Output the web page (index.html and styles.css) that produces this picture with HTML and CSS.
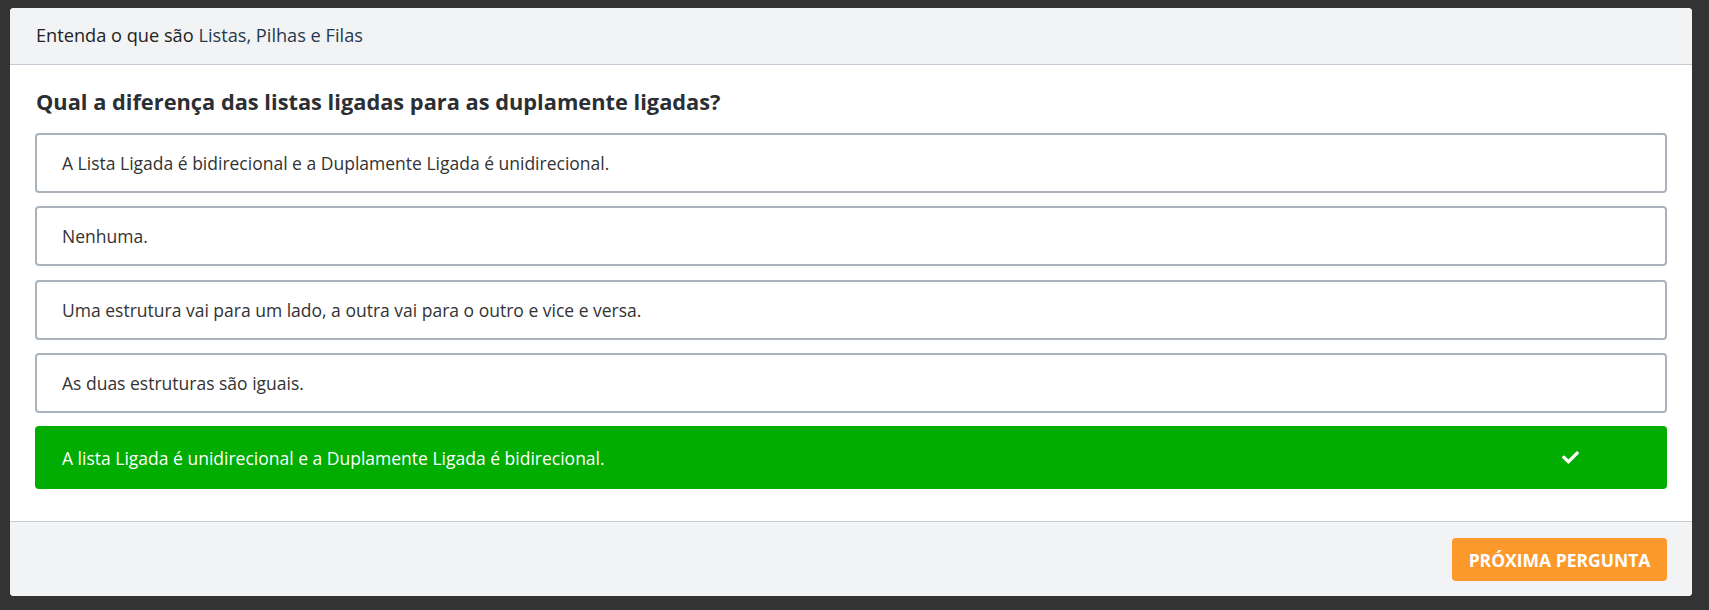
FILE: index.html
```html
<!DOCTYPE html>
<html lang="pt-BR">
<head>
<meta charset="utf-8">
<title>Quiz</title>
<link rel="stylesheet" href="styles.css">
</head>
<body>
<div class="page">
  <div class="card">
    <div class="card-header">
      <span class="crumb">Entenda o que são </span><span class="crumb-link">Listas, Pilhas e Filas</span>
    </div>
    <div class="card-body">
      <h2 class="question">Qual a diferença das listas ligadas para as duplamente ligadas?</h2>
      <div class="options">
        <div class="option">A Lista Ligada é bidirecional e a Duplamente Ligada é unidirecional.</div>
        <div class="option">Nenhuma.</div>
        <div class="option">Uma estrutura vai para um lado, a outra vai para o outro e vice e versa.</div>
        <div class="option">As duas estruturas são iguais.</div>
        <div class="option option-correct">
          <span>A lista Ligada é unidirecional e a Duplamente Ligada é bidirecional.</span>
          <svg class="check" viewBox="0 0 512 512" width="17" height="17" aria-hidden="true"><path fill="#fff" d="M173.898 439.404l-166.4-166.4c-9.997-9.997-9.997-26.206 0-36.204l36.203-36.204c9.997-9.998 26.207-9.998 36.204 0L192 312.69 432.095 72.596c9.997-9.997 26.207-9.997 36.204 0l36.203 36.204c9.997 9.997 9.997 26.206 0 36.204l-294.4 294.401c-9.998 9.997-26.207 9.997-36.204-.001z"/></svg>
        </div>
      </div>
    </div>
    <div class="card-footer">
      <button class="btn-next" type="button">PRÓXIMA PERGUNTA</button>
    </div>
  </div>
</div>
</body>
</html>
```

FILE: styles.css
```css
* { box-sizing: border-box; }
html, body {
  margin: 0;
  padding: 0;
  background: #333333;
}
body {
  font-family: "Open Sans", "Liberation Sans", sans-serif;
  color: #333;
}
.page {
  padding: 8px 17px 14px 10px;
}
.card {
  background: #ffffff;
  border-radius: 4px;
  overflow: hidden;
  height: 588px;
  display: flex;
  flex-direction: column;
}
.card-header {
  background: #f2f3f5;
  border-bottom: 1px solid #c3cad3;
  padding: 15px 26px 17px 26px;
  font-size: 18.2px;
  line-height: 24px;
  height: 57px;
}
.crumb { color: #222; }
.crumb-link { color: #26384f; }
.card-body {
  padding: 22px 25px 32px 25px;
  flex: 1;
}
.question {
  margin: 0 0 16px 1px;
  font-size: 21.8px;
  line-height: 30px;
  font-weight: 700;
  color: #2b2f33;
}
.options {
  display: flex;
  flex-direction: column;
  gap: 13.3px;
}
.option {
  border: 2px solid #aab2bb;
  border-radius: 4px;
  padding: 16px 25px 16px 25px;
  font-size: 17.5px;
  line-height: 24px;
  color: #333;
  height: 60px;
}
.option-correct {
  background: #00ad00;
  border: none;
  height: 63px;
  padding: 19.5px 25px 19.5px 27px;
  color: #fff;
  font-weight: 400;
  display: flex;
  align-items: center;
  justify-content: space-between;
}
.check {
  margin-right: 63px;
  display: block;
}
.card-footer {
  background: #f2f3f5;
  border-top: 1px solid #c8cbd0;
  padding: 16px 25px 15px 25px;
  display: flex;
  justify-content: flex-end;
  height: 75px;
}
.btn-next {
  background: #fb992c;
  color: #fff;
  border: none;
  border-radius: 4px;
  font-family: "Open Sans", "Liberation Sans", sans-serif;
  font-weight: 700;
  font-size: 17.5px;
  padding: 0 16px;
  height: 43px;
  width: 215px;
}
```
